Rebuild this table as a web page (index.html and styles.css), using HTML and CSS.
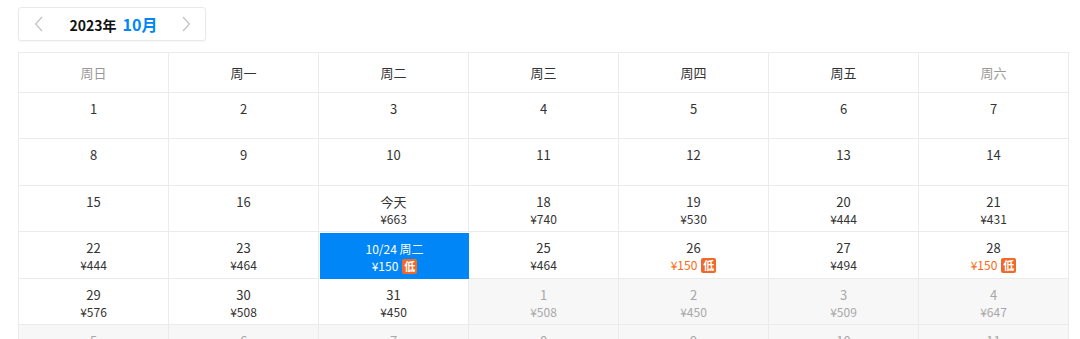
FILE: index.html
```html
<!DOCTYPE html>
<html lang="zh-CN">
<head>
<meta charset="utf-8">
<link rel="stylesheet" href="styles.css">
</head>
<body>
<div class="page">
  <div class="month-switch">
    <span class="arrow"><svg width="9" height="16" viewBox="0 0 9 16"><path d="M8 1 L1.6 8 L8 15" fill="none" stroke="#c4c4c4" stroke-width="1.3"/></svg></span>
    <span class="title"><span class="year">2023年</span><span class="month">10月</span></span>
    <span class="arrow"><svg width="9" height="16" viewBox="0 0 9 16"><path d="M1 1 L7.4 8 L1 15" fill="none" stroke="#c4c4c4" stroke-width="1.3"/></svg></span>
  </div>
  <div class="cal">
    <div class="hd weekend">周日</div><div class="hd">周一</div><div class="hd">周二</div><div class="hd">周三</div><div class="hd">周四</div><div class="hd">周五</div><div class="hd weekend">周六</div>

    <div class="c"><span class="d">1</span></div><div class="c"><span class="d">2</span></div><div class="c"><span class="d">3</span></div><div class="c"><span class="d">4</span></div><div class="c"><span class="d">5</span></div><div class="c"><span class="d">6</span></div><div class="c"><span class="d">7</span></div>

    <div class="c"><span class="d">8</span></div><div class="c"><span class="d">9</span></div><div class="c"><span class="d">10</span></div><div class="c"><span class="d">11</span></div><div class="c"><span class="d">12</span></div><div class="c"><span class="d">13</span></div><div class="c"><span class="d">14</span></div>

    <div class="c"><span class="d">15</span></div><div class="c"><span class="d">16</span></div>
    <div class="c"><span class="d">今天</span><span class="p">¥663</span></div>
    <div class="c"><span class="d">18</span><span class="p">¥740</span></div>
    <div class="c"><span class="d">19</span><span class="p">¥530</span></div>
    <div class="c"><span class="d">20</span><span class="p">¥444</span></div>
    <div class="c"><span class="d">21</span><span class="p">¥431</span></div>

    <div class="c"><span class="d">22</span><span class="p">¥444</span></div>
    <div class="c"><span class="d">23</span><span class="p">¥464</span></div>
    <div class="c sel"><span class="d">10/24 周二</span><span class="p">¥150<i class="low">低</i></span></div>
    <div class="c"><span class="d">25</span><span class="p">¥464</span></div>
    <div class="c"><span class="d">26</span><span class="p cheap">¥150<i class="low">低</i></span></div>
    <div class="c"><span class="d">27</span><span class="p">¥494</span></div>
    <div class="c"><span class="d">28</span><span class="p cheap">¥150<i class="low">低</i></span></div>

    <div class="c"><span class="d">29</span><span class="p">¥576</span></div>
    <div class="c"><span class="d">30</span><span class="p">¥508</span></div>
    <div class="c"><span class="d">31</span><span class="p">¥450</span></div>
    <div class="c next"><span class="d">1</span><span class="p">¥508</span></div>
    <div class="c next"><span class="d">2</span><span class="p">¥450</span></div>
    <div class="c next"><span class="d">3</span><span class="p">¥509</span></div>
    <div class="c next"><span class="d">4</span><span class="p">¥647</span></div>

    <div class="c next"><span class="d">5</span><span class="p">¥512</span></div>
    <div class="c next"><span class="d">6</span><span class="p">¥498</span></div>
    <div class="c next"><span class="d">7</span><span class="p">¥520</span></div>
    <div class="c next"><span class="d">8</span><span class="p">¥476</span></div>
    <div class="c next"><span class="d">9</span><span class="p">¥455</span></div>
    <div class="c next"><span class="d">10</span><span class="p">¥533</span></div>
    <div class="c next"><span class="d">11</span><span class="p">¥601</span></div>
  </div>
</div>
</body>
</html>
```

FILE: styles.css
```css
html, body {
  margin: 0;
  padding: 0;
  background: #fff;
  overflow: hidden;
}
body {
  font-family: "Microsoft YaHei", "Noto Sans CJK SC", "Noto Sans", sans-serif;
  color: #333;
}
.page {
  padding: 7px 0 0 18px;
}
.month-switch {
  box-sizing: border-box;
  width: 188px;
  height: 34px;
  border: 1px solid #e8e8e8;
  border-radius: 3px;
  box-shadow: 0 1px 2px rgba(0,0,0,0.04);
  display: flex;
  align-items: center;
  justify-content: space-between;
  padding: 0 14px 0 15px;
}
.arrow {
  display: flex;
  align-items: center;
}
.title {
  display: flex;
  align-items: baseline;
  gap: 6px;
  margin-left: 2px;
}
.year {
  font-size: 14px;
  font-weight: bold;
  color: #111;
}
.month {
  font-size: 16px;
  font-weight: bold;
  color: #0086f6;
}
.cal {
  margin-top: 11px;
  width: 1051px;
  display: grid;
  grid-template-columns: repeat(7, 150px);
  grid-template-rows: 40px repeat(6, 46.4px);
  border-top: 1px solid #ebebeb;
  border-left: 1px solid #ebebeb;
}
.hd, .c {
  border-right: 1px solid #ebebeb;
  border-bottom: 1px solid #ebebeb;
  box-sizing: border-box;
  text-align: center;
}
.hd {
  font-size: 13px;
  line-height: 39px;
  color: #333;
}
.hd.weekend {
  color: #999;
}
.c {
  display: flex;
  flex-direction: column;
  align-items: center;
  padding-top: 7px;
}
.d {
  font-size: 13px;
  line-height: 18px;
  color: #333;
}
.p {
  font-size: 12px;
  line-height: 16px;
  color: #333;
  display: flex;
  align-items: center;
}
.p.cheap {
  color: #ff6913;
}
.low {
  font-style: normal;
  font-size: 11px;
  font-weight: bold;
  color: #fff;
  background: #f0692a;
  border-radius: 2px;
  line-height: 15px;
  padding: 0 2px;
  margin-left: 4px;
}
.c.sel {
  background: #0086f6;
  margin: 1px 0 0 1px;
  width: 149px;
  border: 0;
}
.c.sel .d, .c.sel .p {
  color: #fff;
}
.c.sel .d {
  font-size: 12px;
}
.c.next {
  background: #f7f7f7;
}
.c.next .d, .c.next .p {
  color: #a8a8a8;
}
```
